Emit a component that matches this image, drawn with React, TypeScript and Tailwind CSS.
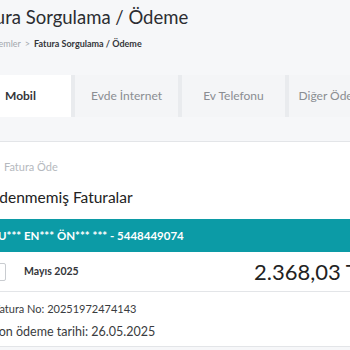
const tabs = ["Evde İnternet", "Ev Telefonu", "Diğer Ödemeler"];

export default function App() {
  return (
    <div className="w-[350px] h-[350px] overflow-hidden bg-[#f6f7f9] font-['Lato','Noto_Sans',sans-serif] text-[#2b2d31]">
      <div className="pt-[5px] h-[75px]">
        <h1 className="text-[18.5px] leading-[24px] ml-[-30px] whitespace-nowrap">Fatura Sorgulama / Ödeme</h1>
        <div className="mt-[9px] flex items-center text-[9px] leading-[12px] ml-[-29px] whitespace-nowrap">
          <span className="text-[#a3a7ad]">Tüm İşlemler</span>
          <span className="text-[#a3a7ad] mx-[4px]">&gt;</span>
          <span className="font-bold text-[#34363a]">Fatura Sorgulama / Ödeme</span>
        </div>
      </div>

      <div className="flex h-[42px] whitespace-nowrap">
        <div className="w-[71px] shrink-0 bg-white flex items-center pl-[5px] text-[12px] font-bold text-[#34363a]">Mobil</div>
        {tabs.map((t) => (
          <div key={t} className="w-[107px] shrink-0 border-l-4 border-[#e9ebee] bg-[#f4f5f7] flex items-center justify-center text-[12px] text-[#8a8d92]">
            {t}
          </div>
        ))}
      </div>

      <div className="h-[25px] border-b border-[#e3e5e8]"></div>

      <div className="bg-white">
        <div className="pt-[19px] pl-[4px] text-[11px] leading-[12px] text-[#b5b9be]">Fatura Öde</div>
        <div className="mt-[13px] ml-[-13px] text-[15.5px] leading-[22px] whitespace-nowrap text-[#222]">Ödenmemiş Faturalar</div>
        <div className="mt-[11px] h-[33px] bg-[#0c9ba6] flex items-center text-[11.5px] font-bold text-white whitespace-nowrap">
          <span className="ml-[-2px]">U*** EN*** ÖN*** *** - 5448449074</span>
        </div>
        <div className="h-[40px] flex items-center border-b border-[#e3e5e8] whitespace-nowrap">
          <div className="ml-[-12px] w-[18px] h-[18px] border border-[#c9ccd0] rounded-[2px] shrink-0"></div>
          <span className="ml-[18px] text-[10.5px] font-bold text-[#34363a]">Mayıs 2025</span>
          <span className="ml-auto mr-[-20px] text-[22px] text-[#222]">2.368,03 TL</span>
        </div>
        <div className="pt-[10px] ml-[-6px] text-[11px] leading-[14px] text-[#3a3c40] whitespace-nowrap">Fatura No: 20251972474143</div>
        <div className="mt-[8px] ml-[-8px] text-[12.5px] leading-[16px] text-[#3a3c40] whitespace-nowrap">Son ödeme tarihi: 26.05.2025</div>
        <div className="h-[7px] border-b border-[#e3e5e8]"></div>
      </div>
    </div>
  );
}
